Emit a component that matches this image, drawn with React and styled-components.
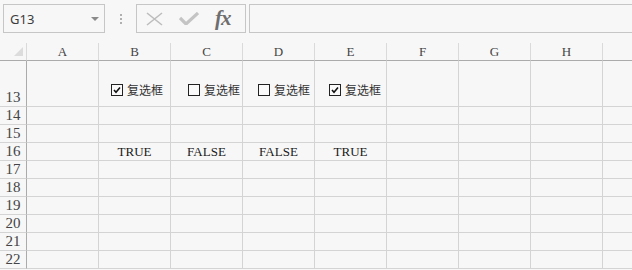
import React from "react";
import styled, { createGlobalStyle } from "styled-components";

const GlobalStyle = createGlobalStyle`
  body {
    margin: 0;
    background: #f7f7f7;
    overflow: hidden;
  }
`;

const COLUMNS = ["A", "B", "C", "D", "E", "F", "G", "H", ""];

const boxes = {
  B: { checked: true, offset: 12 },
  C: { checked: false, offset: 17 },
  D: { checked: false, offset: 15 },
  E: { checked: true, offset: 14 },
};

const values = { B: "TRUE", C: "FALSE", D: "FALSE", E: "TRUE" };

const ROWS = [13, 14, 15, 16, 17, 18, 19, 20, 21, 22];

const serif = `"Liberation Serif", "DejaVu Serif", serif`;

const Page = styled.div`
  width: 632px;
  height: 270px;
  overflow: hidden;
  background: #f7f7f7;
`;

const Toolbar = styled.div`
  display: flex;
  align-items: flex-start;
  height: 43px;
  padding: 4px 0 0 3px;
  box-sizing: border-box;
`;

const NameBox = styled.div`
  display: flex;
  align-items: center;
  justify-content: space-between;
  width: 102px;
  height: 29px;
  box-sizing: border-box;
  border: 1px solid #c6c6c6;
  padding: 0 4px 0 6px;
  font-family: "Noto Sans", "Open Sans", sans-serif;
  font-size: 13px;
  color: #3c3c3c;
`;

const DropArrow = styled.span`
  width: 0;
  height: 0;
  border-left: 4px solid transparent;
  border-right: 4px solid transparent;
  border-top: 4px solid #8a8a8a;
  margin-right: 1px;
`;

const Dots = styled.div`
  display: flex;
  flex-direction: column;
  gap: 2px;
  width: 31px;
  height: 29px;
  align-items: center;
  justify-content: center;
  span {
    width: 2px;
    height: 2px;
    background: #b0b0b0;
  }
`;

const FxGroup = styled.div`
  display: flex;
  align-items: center;
  width: 110px;
  height: 29px;
  box-sizing: border-box;
  border: 1px solid #c6c6c6;
  padding-left: 9px;
  gap: 16px;
`;

const Fx = styled.span`
  font-family: ${serif};
  font-style: italic;
  font-weight: bold;
  font-size: 21px;
  line-height: 21px;
  color: #6e6e6e;
  letter-spacing: -1px;
`;

const FormulaInput = styled.div`
  flex: 1;
  height: 29px;
  margin-left: 3px;
  margin-right: -2px;
  box-sizing: border-box;
  border: 1px solid #c6c6c6;
`;

const Grid = styled.div`
  display: grid;
  grid-template-columns: 27px repeat(9, 72px);
  grid-template-rows: 18px 46px repeat(9, 18px);
  font-family: ${serif};
  font-size: 13px;
  color: #333;
`;

const Corner = styled.div`
  box-sizing: border-box;
  border-right: 1px solid #dadada;
  border-bottom: 1px solid #ababab;
  display: flex;
  align-items: flex-end;
  justify-content: flex-end;
  padding: 0 3px 4px 0;
`;

const ColHead = styled.div`
  box-sizing: border-box;
  border-right: 1px solid ${(p) => (p.$last ? "transparent" : "#dadada")};
  border-bottom: 1px solid #ababab;
  display: flex;
  align-items: center;
  justify-content: center;
  padding-top: 1px;
  color: #444;
`;

const RowHead = styled.div`
  box-sizing: border-box;
  border-right: 1px solid #ababab;
  border-bottom: 1px solid #d4d4d4;
  display: flex;
  align-items: flex-end;
  justify-content: center;
  padding-bottom: 1px;
  line-height: 15px;
  font-size: 15px;
  color: #444;
`;

const Cell = styled.div`
  box-sizing: border-box;
  border-right: 1px solid #d4d4d4;
  border-bottom: 1px solid #d4d4d4;
  display: flex;
  align-items: flex-end;
  justify-content: center;
  padding-bottom: 1px;
  line-height: 15px;
  color: #1a1a1a;
`;

const CheckCell = styled(Cell)`
  justify-content: flex-start;
  align-items: flex-start;
  padding: 23px 0 0 ${(p) => p.$offset}px;
`;

const CheckItem = styled.label`
  display: flex;
  align-items: center;
  gap: 4px;
  font-family: "Noto Sans CJK SC", "Noto Sans", sans-serif;
  font-size: 12px;
  line-height: 12px;
  color: #333;
`;

const Box = styled.span`
  width: 12px;
  height: 12px;
  box-sizing: border-box;
  border: 1px solid #222;
  background: #fafafa;
  display: flex;
  align-items: center;
  justify-content: center;
`;

function CheckBox({ checked }) {
  return (
    <CheckItem>
      <Box>
        {checked && (
          <svg width="8" height="8" viewBox="0 0 8 8">
            <path d="M1 4 L3 6.3 L7 1.5" fill="none" stroke="#111" strokeWidth="1.6" />
          </svg>
        )}
      </Box>
      复选框
    </CheckItem>
  );
}

function Toolbox() {
  return (
    <Toolbar>
      <NameBox>
        G13
        <DropArrow />
      </NameBox>
      <Dots>
        <span />
        <span />
        <span />
      </Dots>
      <FxGroup>
        <svg width="17" height="14" viewBox="0 0 17 14">
          <path d="M1 1 L16 13 M16 1 L1 13" stroke="#bdbdbd" strokeWidth="1.6" />
        </svg>
        <svg width="20" height="13" viewBox="0 0 20 13">
          <path d="M1 6 L7 12 L19 1" fill="none" stroke="#c4c4c4" strokeWidth="3.2" />
        </svg>
        <Fx>fx</Fx>
      </FxGroup>
      <FormulaInput />
    </Toolbar>
  );
}

export default function App() {
  return (
    <Page>
      <GlobalStyle />
      <Toolbox />
      <Grid>
        <Corner>
          <svg width="9" height="9" viewBox="0 0 9 9">
            <path d="M9 0 L9 9 L0 9 Z" fill="#dcdcdc" />
          </svg>
        </Corner>
        {COLUMNS.map((c, i) => (
          <ColHead key={"h" + i} $last={i === COLUMNS.length - 1}>
            {c}
          </ColHead>
        ))}
        {ROWS.map((r) => (
          <React.Fragment key={r}>
            <RowHead>{r}</RowHead>
            {COLUMNS.map((c, i) => {
              if (r === 13 && boxes[c]) {
                return (
                  <CheckCell key={c + i} $offset={boxes[c].offset}>
                    <CheckBox checked={boxes[c].checked} />
                  </CheckCell>
                );
              }
              return <Cell key={c + i}>{r === 16 ? values[c] : null}</Cell>;
            })}
          </React.Fragment>
        ))}
      </Grid>
    </Page>
  );
}
